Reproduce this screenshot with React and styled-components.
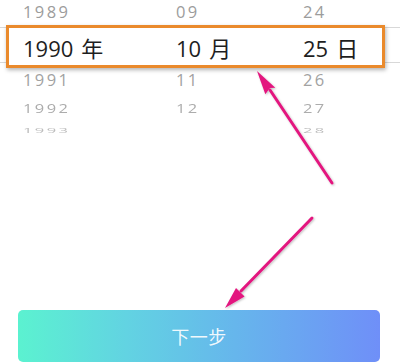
import React from 'react';
import styled, { createGlobalStyle } from 'styled-components';

const GlobalStyle = createGlobalStyle`
    html, body {
        margin: 0;
        padding: 0;
        background: #fff;
    }
`;

const Page = styled.div`
    position: relative;
    width: 400px;
    height: 364px;
    display: flex;
    flex-direction: column;
    overflow: hidden;
    background: #fff;
    font-family: "Open Sans", "Noto Sans CJK SC", sans-serif;
`;

const Picker = styled.div`
    display: flex;
    flex-direction: column;
`;

const Row = styled.div`
    display: grid;
    grid-template-columns: 153px 127px 1fr;
    align-items: center;
    padding-left: 23px;
    height: ${p => p.h}px;
    margin-top: ${p => p.mt || 0}px;
    color: ${p => p.color};
    font-size: 16.5px;
    letter-spacing: 2.4px;
    transform: scaleY(${p => p.sy || 1});
`;

// the two thin divider lines of the wheel sit behind the selected box
const Band = styled.div`
    margin-top: 2px;
    height: 43px;
    background:
        linear-gradient(to bottom, transparent 2px, #d8d8d8 2px, #d8d8d8 3px, transparent 3px),
        linear-gradient(to bottom, transparent 37px, #d8d8d8 37px, #d8d8d8 38px, transparent 38px);
`;

const SelectedBox = styled.div`
    box-sizing: border-box;
    height: 43px;
    margin: 0 15px 0 6px;
    border: 3px solid #ea8a2c;
    background: #fff;
    box-shadow: 1px 2px 4px rgba(0, 0, 0, 0.3);
    display: grid;
    grid-template-columns: 153px 127px 1fr;
    align-items: center;
    padding-left: 14px;
    color: #1e1e1e;
    font-size: 22px;
`;

const Unit = styled.span`
    margin-left: 8px;
`;

const Spacer = styled.div`
    flex: 1;
`;

const NextButton = styled.button`
    height: 52px;
    margin: 0 20px 2px 18px;
    border: none;
    border-radius: 5px;
    background: linear-gradient(to right, #5bf2d0 0%, #62d3e2 30%, #66b6ec 60%, #6f8ff8 100%);
    color: rgba(255, 255, 255, 0.92);
    font-family: "Noto Sans CJK SC", sans-serif;
    font-size: 18px;
    letter-spacing: 0.5px;
`;

const Overlay = styled.svg`
    position: absolute;
    left: 0;
    top: 0;
    pointer-events: none;
`;

const above = [
    { y: '1989', m: '09', d: '24', h: 23, color: '#9c9c9c' },
];
const below = [
    { y: '1991', m: '11', d: '26', h: 22, color: '#a2a2a2' },
    { y: '1992', m: '12', d: '27', h: 23, mt: 6, sy: 0.78, color: '#acacac' },
    { y: '1993', m: '', d: '28', h: 23, sy: 0.42, color: '#bdbdbd' },
];

const Arrow = ({ line, head }) => (
    <g filter="url(#shadow)">
        <line x1={line[0]} y1={line[1]} x2={line[2]} y2={line[3]} stroke="#e3177f" strokeWidth="3" strokeLinecap="round" />
        <polygon points={head} fill="#e3177f" />
    </g>
);

const PickerRow = ({ r }) => (
    <Row h={r.h} mt={r.mt} sy={r.sy} color={r.color}>
        <span>{r.y}</span>
        <span>{r.m}</span>
        <span>{r.d}</span>
    </Row>
);

const App = () => {
    return (
        <Page>
            <GlobalStyle />
            <Picker>
                {above.map(r => <PickerRow key={r.y} r={r} />)}
                <Band>
                    <SelectedBox>
                        <span>1990<Unit>年</Unit></span>
                        <span>10<Unit>月</Unit></span>
                        <span>25<Unit>日</Unit></span>
                    </SelectedBox>
                </Band>
                {below.map(r => <PickerRow key={r.y} r={r} />)}
            </Picker>
            <Spacer />
            <NextButton>下一步</NextButton>
            <Overlay width="400" height="364" viewBox="0 0 400 364">
                <defs>
                    <filter id="shadow" x="-20%" y="-20%" width="140%" height="140%">
                        <feDropShadow dx="1" dy="1" stdDeviation="1" floodColor="#000" floodOpacity="0.25" />
                    </filter>
                </defs>
                <Arrow line={[332, 183, 270, 90]} head="257,71 275.3,87.7 270,88 265.3,94.3" />
                <Arrow line={[312, 218, 241, 291]} head="225,308 236,288 240,292 244.6,296.4" />
            </Overlay>
        </Page>
    );
};

export default App;
